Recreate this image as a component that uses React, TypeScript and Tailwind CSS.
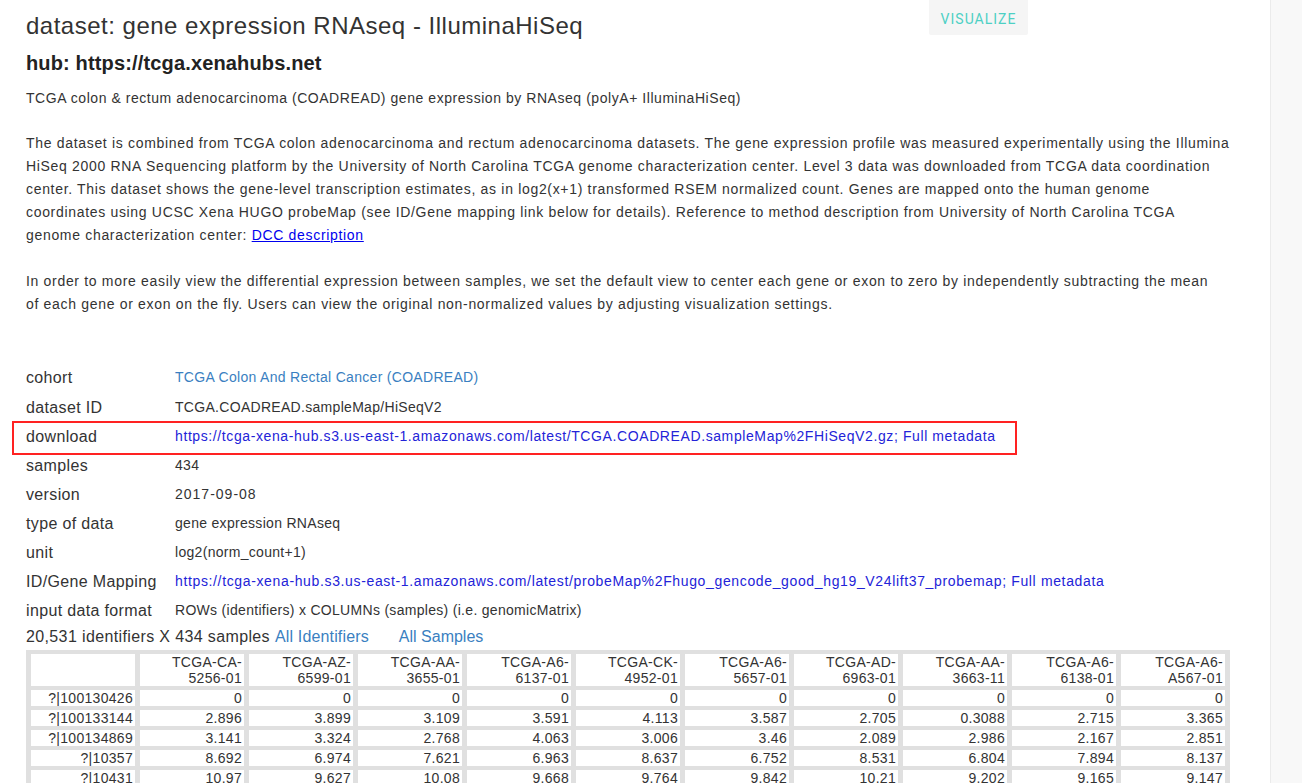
import React from "react";

const cols = [
  ["TCGA-CA-", "5256-01"],
  ["TCGA-AZ-", "6599-01"],
  ["TCGA-AA-", "3655-01"],
  ["TCGA-A6-", "6137-01"],
  ["TCGA-CK-", "4952-01"],
  ["TCGA-A6-", "5657-01"],
  ["TCGA-AD-", "6963-01"],
  ["TCGA-AA-", "3663-11"],
  ["TCGA-A6-", "6138-01"],
  ["TCGA-A6-", "A567-01"],
];

const rows: [string, string[]][] = [
  ["?|100130426", ["0", "0", "0", "0", "0", "0", "0", "0", "0", "0"]],
  ["?|100133144", ["2.896", "3.899", "3.109", "3.591", "4.113", "3.587", "2.705", "0.3088", "2.715", "3.365"]],
  ["?|100134869", ["3.141", "3.324", "2.768", "4.063", "3.006", "3.46", "2.089", "2.986", "2.167", "2.851"]],
  ["?|10357", ["8.692", "6.974", "7.621", "6.963", "8.637", "6.752", "8.531", "6.804", "7.894", "8.137"]],
  ["?|10431", ["10.97", "9.627", "10.08", "9.668", "9.764", "9.842", "10.21", "9.202", "9.165", "9.147"]],
];

function MetaRow({ label, children, h = "h-[29px]", box = false }: { label: string; children: React.ReactNode; h?: string; box?: boolean }) {
  return (
    <div className={`relative flex items-center ${h}`}>
      <div className="w-[149px] shrink-0 text-[16px] tracking-[0.35px] text-[#333]">{label}</div>
      <div className="text-[14px] tracking-[0.3px] text-[#333] whitespace-nowrap">{children}</div>
      {box && (
        <div className="pointer-events-none absolute left-[-14px] top-[-1px] h-[34px] w-[1005px] border-2 border-[#ff2222]" />
      )}
    </div>
  );
}

export default function App() {
  const font = { fontFamily: '"Liberation Sans", Arial, sans-serif' };
  return (
    <div className="flex h-[783px] w-[1302px] overflow-hidden bg-white" style={font}>
      <main className="w-[1270px] shrink-0 pl-[26px] pr-[40px]">
        <div className="flex items-start">
          <h1 className="w-[903px] shrink-0 pt-[10px] text-[24px] leading-[32px] font-normal tracking-[0.5px] text-[#333]">
            dataset: gene expression RNAseq - IlluminaHiSeq
          </h1>
          <button className="h-[35px] w-[99px] rounded-b-[2px] bg-[#f5f5f5] pt-[3px] text-[14px] tracking-[1px] text-[#4dd0c4]" style={{ fontFamily: 'Roboto, "Liberation Sans", sans-serif' }}>
            VISUALIZE
          </button>
        </div>
        <h2 className="mt-[7px] text-[20px] leading-[28px] font-semibold tracking-[0.15px] text-[#222]">hub: https://tcga.xenahubs.net</h2>
        <p className="mt-[11px] whitespace-nowrap text-[14px] leading-[20px] tracking-[0.55px] text-[#333]">
          TCGA colon &amp; rectum adenocarcinoma (COADREAD) gene expression by RNAseq (polyA+ IlluminaHiSeq)
        </p>
        <p className="mt-[24px] whitespace-nowrap text-[14px] leading-[23px] tracking-[0.68px] text-[#333]">
          The dataset is combined from TCGA colon adenocarcinoma and rectum adenocarcinoma datasets. The gene expression profile was measured experimentally using the Illumina
          <br />
          HiSeq 2000 RNA Sequencing platform by the University of North Carolina TCGA genome characterization center. Level 3 data was downloaded from TCGA data coordination
          <br />
          center. This dataset shows the gene-level transcription estimates, as in log2(x+1) transformed RSEM normalized count. Genes are mapped onto the human genome
          <br />
          coordinates using UCSC Xena HUGO probeMap (see ID/Gene mapping link below for details). Reference to method description from University of North Carolina TCGA
          <br />
          genome characterization center: <a className="text-[#0000ee] underline" href="#">DCC description</a>
        </p>
        <p className="mt-[23px] whitespace-nowrap text-[14px] leading-[23px] tracking-[0.68px] text-[#333]">
          In order to more easily view the differential expression between samples, we set the default view to center each gene or exon to zero by independently subtracting the mean
          <br />
          of each gene or exon on the fly. Users can view the original non-normalized values by adjusting visualization settings.
        </p>

        <div className="mt-[46px]">
          <MetaRow label="cohort" h="h-[31px]">
            <a className="text-[#3a7fc1]" href="#">TCGA Colon And Rectal Cancer (COADREAD)</a>
          </MetaRow>
          <MetaRow label="dataset ID">TCGA.COADREAD.sampleMap/HiSeqV2</MetaRow>
          <MetaRow label="download" box>
            <span className="tracking-[0.6px]">
              <a className="text-[#2323d8]" href="#">https://tcga-xena-hub.s3.us-east-1.amazonaws.com/latest/TCGA.COADREAD.sampleMap%2FHiSeqV2.gz</a>
              <span className="text-[#2323d8]">; </span>
              <a className="text-[#2323d8]" href="#">Full metadata</a>
            </span>
          </MetaRow>
          <MetaRow label="samples">434</MetaRow>
          <MetaRow label="version">
            <span className="tracking-[1px]">2017-09-08</span>
          </MetaRow>
          <MetaRow label="type of data">gene expression RNAseq</MetaRow>
          <MetaRow label="unit">log2(norm_count+1)</MetaRow>
          <MetaRow label="ID/Gene Mapping">
            <span className="tracking-[0.64px]">
              <a className="text-[#2323d8]" href="#">https://tcga-xena-hub.s3.us-east-1.amazonaws.com/latest/probeMap%2Fhugo_gencode_good_hg19_V24lift37_probemap</a>
              <span className="text-[#2323d8]">; </span>
              <a className="text-[#2323d8]" href="#">Full metadata</a>
            </span>
          </MetaRow>
          <MetaRow label="input data format">ROWs (identifiers) x COLUMNs (samples) (i.e. genomicMatrix)</MetaRow>
          <div className="flex h-[24px] items-center text-[16px] text-[#333]">
            <span className="tracking-[0.37px]">20,531 identifiers X 434 samples</span>
            <a className="ml-[5px] tracking-[0.15px] text-[#3a7fc1]" href="#">All Identifiers</a>
            <a className="ml-[30px] text-[#3a7fc1]" href="#">All Samples</a>
          </div>
        </div>

        <table className="mt-[1px] w-[1204px] table-fixed border-separate border-spacing-x-[5px] border-spacing-y-[4px] bg-[#e0e0e0] text-[14px] leading-[16px] tracking-[0.3px] text-[#333]">
          <colgroup>
            <col className="w-[104px]" />
            {cols.map((_, i) => (
              <col key={i} className="w-[104px]" />
            ))}
          </colgroup>
          <thead>
            <tr>
              <th className="bg-white p-0" />
              {cols.map((c, i) => (
                <th key={i} className="bg-white p-0 pr-[2px] text-right font-normal">
                  {c[0]}
                  <br />
                  {c[1]}
                </th>
              ))}
            </tr>
          </thead>
          <tbody>
            {rows.map(([id, vals]) => (
              <tr key={id}>
                <td className="bg-white p-0 pr-[2px] text-right">{id}</td>
                {vals.map((v, i) => (
                  <td key={i} className="bg-white p-0 pr-[2px] text-right">
                    {v}
                  </td>
                ))}
              </tr>
            ))}
          </tbody>
        </table>
      </main>
      <aside className="h-full flex-1 border-l border-[#ebebeb] bg-[#f8f8f8]" />
    </div>
  );
}
